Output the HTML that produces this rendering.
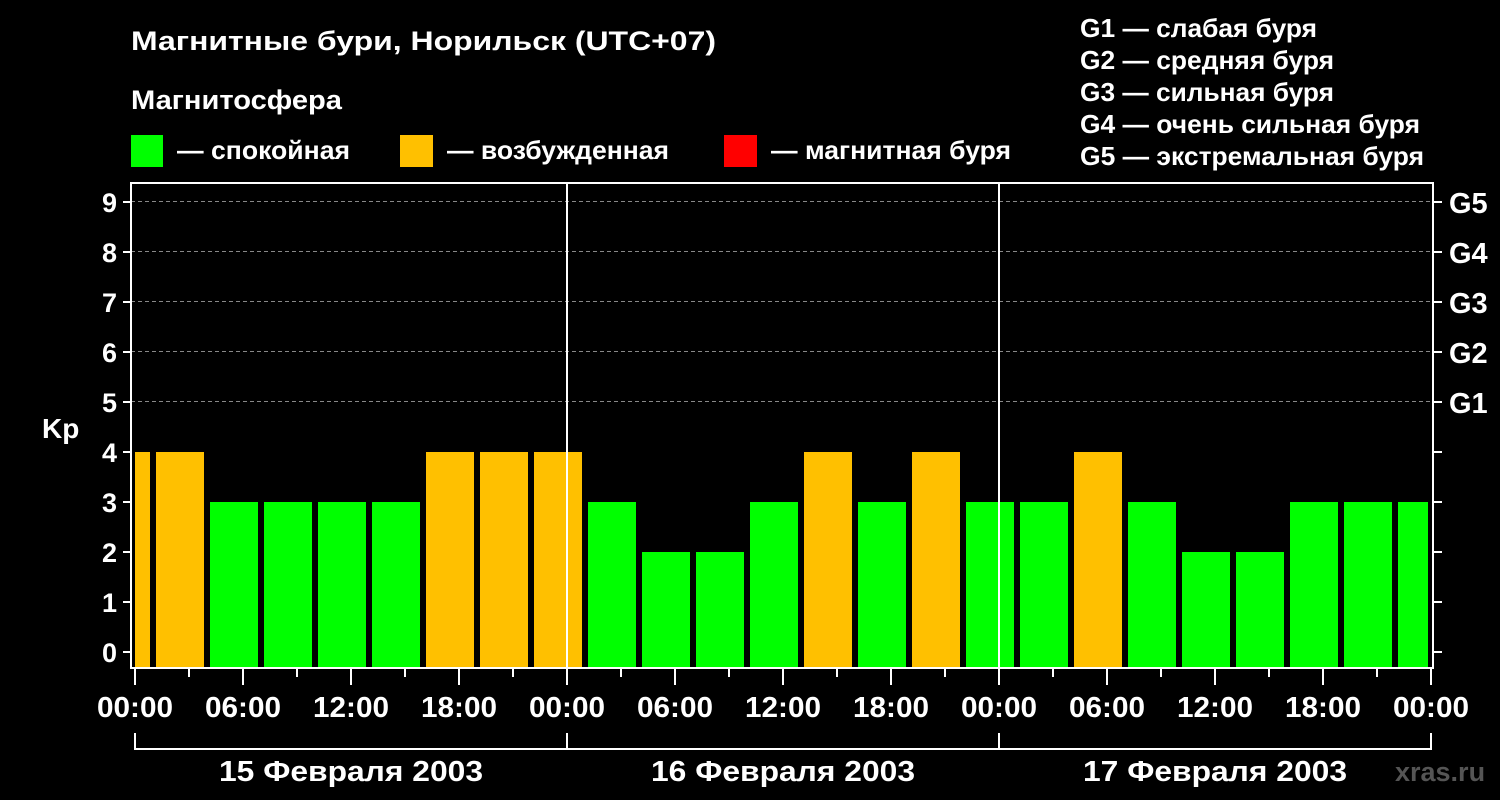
<!DOCTYPE html><html><head><style>body{margin:0;background:#000}svg{display:block}text{font-family:"Liberation Sans",sans-serif;font-weight:bold;fill:#fff}</style></head><body>
<svg width="1500" height="800" viewBox="0 0 1500 800">
<rect width="1500" height="800" fill="#000"/>
<text x="131" y="50" font-size="27" textLength="585" lengthAdjust="spacingAndGlyphs">Магнитные бури, Норильск (UTC+07)</text>
<text x="131" y="109" font-size="27" textLength="211" lengthAdjust="spacingAndGlyphs">Магнитосфера</text>
<rect x="131" y="135" width="32" height="32" fill="#00ff00"/><text x="177" y="159" font-size="26" textLength="173" lengthAdjust="spacingAndGlyphs">— спокойная</text>
<rect x="400" y="135" width="33" height="32" fill="#ffc000"/><text x="447" y="159" font-size="26" textLength="222" lengthAdjust="spacingAndGlyphs">— возбужденная</text>
<rect x="724" y="135" width="33" height="32" fill="#ff0000"/><text x="771" y="159" font-size="26" textLength="240" lengthAdjust="spacingAndGlyphs">— магнитная буря</text>
<g font-size="26" lengthAdjust="spacingAndGlyphs"><text x="1080" y="37" textLength="237" lengthAdjust="spacingAndGlyphs">G1 — слабая буря</text><text x="1080" y="69" textLength="254" lengthAdjust="spacingAndGlyphs">G2 — средняя буря</text><text x="1080" y="101" textLength="254" lengthAdjust="spacingAndGlyphs">G3 — сильная буря</text><text x="1080" y="133" textLength="340" lengthAdjust="spacingAndGlyphs">G4 — очень сильная буря</text><text x="1080" y="165" textLength="344" lengthAdjust="spacingAndGlyphs">G5 — экстремальная буря</text></g>
<g stroke="#888" stroke-width="1" stroke-dasharray="4,3"><line x1="131" x2="1433" y1="201.5" y2="201.5"/><line x1="131" x2="1433" y1="251.5" y2="251.5"/><line x1="131" x2="1433" y1="301.5" y2="301.5"/><line x1="131" x2="1433" y1="351.5" y2="351.5"/><line x1="131" x2="1433" y1="401.5" y2="401.5"/></g>
<g id="bars"></g>
<g stroke="#fff" stroke-width="2" fill="none"><rect x="131" y="183" width="1302" height="485"/><line x1="567" x2="567" y1="183" y2="668"/><line x1="999" x2="999" y1="183" y2="668"/>
<path d="M123 652h8M123 602h8M123 552h8M123 502h8M123 452h8M123 402h8M123 352h8M123 302h8M123 252h8M123 202h8M1433 652h9M1433 602h9M1433 552h9M1433 502h9M1433 452h9M1433 402h9M1433 352h9M1433 302h9M1433 252h9M1433 202h9"/>
<path d="M135 733v16h1296v-16M567 733v16M999 733v16"/></g>
<g id="ticks" stroke="#fff" stroke-width="2"></g>
<g font-size="27" text-anchor="end"><text x="117" y="662">0</text><text x="117" y="612">1</text><text x="117" y="562">2</text><text x="117" y="512">3</text><text x="117" y="462">4</text><text x="117" y="412">5</text><text x="117" y="362">6</text><text x="117" y="312">7</text><text x="117" y="262">8</text><text x="117" y="212">9</text></g>
<text x="42" y="438" font-size="28">Kp</text>
<g font-size="29"><text x="1449" y="213">G5</text><text x="1449" y="263">G4</text><text x="1449" y="313">G3</text><text x="1449" y="363">G2</text><text x="1449" y="413">G1</text></g>
<g font-size="29" text-anchor="middle" id="xl"></g>
<g font-size="29" text-anchor="middle"><text x="351" y="781" textLength="264" lengthAdjust="spacingAndGlyphs">15 Февраля 2003</text><text x="783" y="781" textLength="264" lengthAdjust="spacingAndGlyphs">16 Февраля 2003</text><text x="1215" y="781" textLength="264" lengthAdjust="spacingAndGlyphs">17 Февраля 2003</text></g>
<text x="1395" y="781" font-size="27" style="fill:#555">xras.ru</text>
</svg>
<script>
var v=[4,4,3,3,3,3,4,4,4,3,2,2,3,4,3,4,3,3,4,3,2,2,3,3,3];
var ns="http://www.w3.org/2000/svg",b=document.getElementById('bars');
v.forEach(function(k,i){var c=126+54*i,x1=Math.max(c-24,135),x2=Math.min(c+24,1428);var r=document.createElementNS(ns,'rect');r.setAttribute('x',x1);r.setAttribute('width',x2-x1);var t=652-50*k;r.setAttribute('y',t);r.setAttribute('height',667-t);r.setAttribute('fill',k>=4?'#ffc000':'#00ff00');b.appendChild(r);});
var tk=document.getElementById('ticks'),xl=document.getElementById('xl'),lb=['00:00','06:00','12:00','18:00'];
for(var i=0;i<=24;i++){var x=135+54*i;var l=document.createElementNS(ns,'line');l.setAttribute('x1',x);l.setAttribute('x2',x);l.setAttribute('y1',668);l.setAttribute('y2',i%2?677:685);tk.appendChild(l);
if(i%2==0){var t=document.createElementNS(ns,'text');t.setAttribute('x',x);t.setAttribute('y',717);t.setAttribute('textLength',76);t.setAttribute('lengthAdjust','spacingAndGlyphs');t.textContent=lb[(i/2)%4];xl.appendChild(t);}}
</script>
</body></html>
